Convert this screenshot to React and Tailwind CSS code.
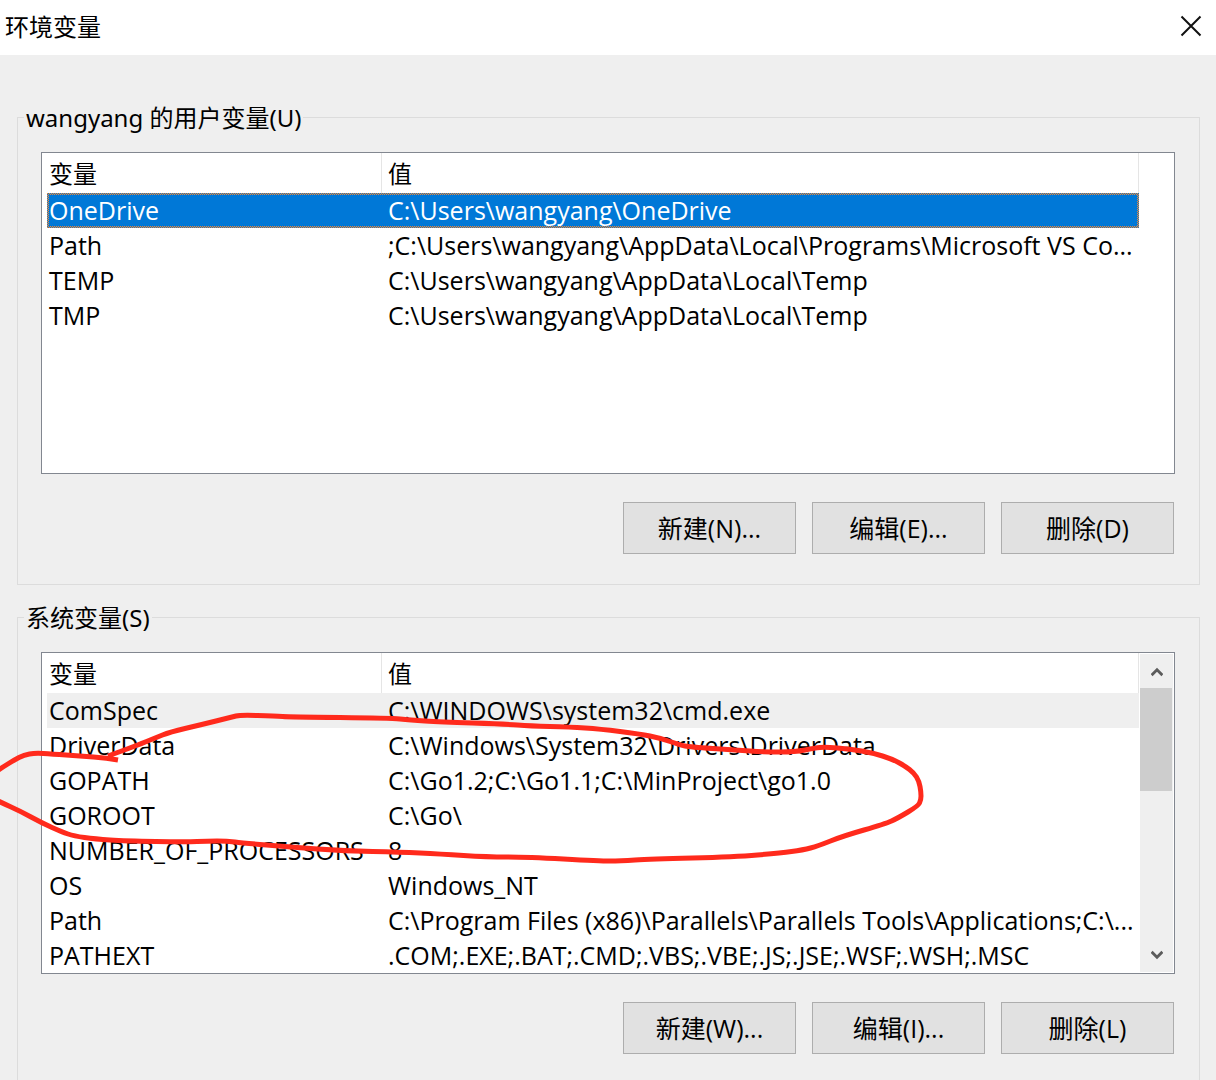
import clsx from 'clsx';

const userVariables = [
  { name: 'OneDrive', value: 'C:\\Users\\wangyang\\OneDrive', state: 'selected' },
  { name: 'Path', value: ';C:\\Users\\wangyang\\AppData\\Local\\Programs\\Microsoft VS Co...' },
  { name: 'TEMP', value: 'C:\\Users\\wangyang\\AppData\\Local\\Temp' },
  { name: 'TMP', value: 'C:\\Users\\wangyang\\AppData\\Local\\Temp' },
];

const systemVariables = [
  { name: 'ComSpec', value: 'C:\\WINDOWS\\system32\\cmd.exe', state: 'inactive' },
  { name: 'DriverData', value: 'C:\\Windows\\System32\\Drivers\\DriverData' },
  { name: 'GOPATH', value: 'C:\\Go1.2;C:\\Go1.1;C:\\MinProject\\go1.0' },
  { name: 'GOROOT', value: 'C:\\Go\\' },
  { name: 'NUMBER_OF_PROCESSORS', value: '8' },
  { name: 'OS', value: 'Windows_NT' },
  { name: 'Path', value: 'C:\\Program Files (x86)\\Parallels\\Parallels Tools\\Applications;C:\\...' },
  { name: 'PATHEXT', value: '.COM;.EXE;.BAT;.CMD;.VBS;.VBE;.JS;.JSE;.WSF;.WSH;.MSC' },
];

const strokePoints = [
  [118, 760], [107, 758], [80, 756], [52, 754], [35, 753], [24, 755], [14, 760], [0, 769], [-16, 779],
  [-16, 794], [0, 802], [20, 811], [42, 823], [62, 832], [74, 836], [95, 839], [125, 841], [187, 842],
  [207, 841], [227, 841], [243, 843], [290, 847], [345, 851], [400, 852], [440, 854], [487, 857],
  [527, 857], [600, 861], [620, 861], [650, 859], [735, 857], [780, 853], [803, 850], [818, 846],
  [843, 836], [885, 824], [898, 818], [918, 806], [921, 800], [921, 792], [919, 781], [914, 773],
  [905, 766], [892, 759], [873, 753], [850, 749], [825, 747], [815, 748], [795, 752], [765, 752],
  [735, 750], [690, 747], [680, 745], [660, 738], [640, 734], [600, 729], [570, 727], [530, 726],
  [505, 724], [440, 722], [410, 720], [390, 718], [290, 717], [275, 716], [240, 715], [232, 717],
  [200, 725], [170, 732], [155, 738], [138, 745], [108, 756],
];

// joins the points with quadratic curves through their midpoints
function smoothPath(points) {
  const last = points[points.length - 1];
  const curves = points.slice(1, -1).map(([x, y], i) => {
    const [nx, ny] = points[i + 2];
    return `Q${x} ${y} ${(x + nx) / 2} ${(y + ny) / 2}`;
  });
  return `M${points[0][0]} ${points[0][1]} ${curves.join(' ')} L${last[0]} ${last[1]}`;
}

function ScrollBar() {
  return (
    <div className="flex w-full flex-col bg-[#efefef]">
      <button type="button" aria-label="Scroll up" className="flex h-[34px] items-center justify-center pt-[2px]">
        <svg width="12" height="10" viewBox="0 0 12 10" fill="none" stroke="#5c5c5c" strokeWidth="2.8">
          <path d="M0.6 8.2 L6 2.8 L11.4 8.2" />
        </svg>
      </button>
      <div className="mr-px h-[103px] bg-[#cdcdcd]" />
      <div className="flex-1" />
      <button type="button" aria-label="Scroll down" className="flex h-[34px] items-center justify-center">
        <svg width="12" height="10" viewBox="0 0 12 10" fill="none" stroke="#5c5c5c" strokeWidth="2.8">
          <path d="M0.6 1.8 L6 7.2 L11.4 1.8" />
        </svg>
      </button>
    </div>
  );
}

function VariableTable({ variables, scrollable }) {
  return (
    <div className="flex min-h-[322px] border border-[#828790] bg-white">
      <div className="min-w-0 flex-1 pl-[5px]">
        <table className="w-full table-fixed border-separate border-spacing-0 text-left">
          <thead>
            <tr className="h-10">
              <th className="w-[335px] border-r border-[#e5e5e5] p-0 pl-[2px] font-normal">变量</th>
              <th className="border-r border-[#e5e5e5] p-0 pl-[6px] font-normal">值</th>
            </tr>
          </thead>
          <tbody className="font-['Open_Sans','Noto_Sans_CJK_SC',sans-serif] text-[25px]">
            {variables.map(({ name, value, state }) => (
              <tr
                key={name}
                className={clsx(
                  'h-[35px]',
                  state === 'inactive' && 'bg-[#efefef]',
                  state === 'selected' &&
                    'bg-[image:linear-gradient(#0078d7,#0078d7),repeating-conic-gradient(#ff8728_0_25%,#0078d7_0_50%)] bg-[length:calc(100%-4px)_calc(100%-4px),2px_2px] bg-[position:center,1px_0] [background-repeat:no-repeat,repeat] text-white'
                )}
              >
                <td className="truncate p-0 pl-[2px]">{name}</td>
                <td className="truncate p-0 pl-[6px]">{value}</td>
              </tr>
            ))}
          </tbody>
        </table>
      </div>
      <div className="m-px flex w-[33px] shrink-0">{scrollable && <ScrollBar />}</div>
    </div>
  );
}

function VariableGroup({ title, variables, actions, scrollable }) {
  return (
    <fieldset className="min-w-0 border border-[#dcdcdc] pt-[18px] pr-6 pb-[30px] pl-[23px]">
      <legend className="-ml-[17px] px-[2px]">{title}</legend>
      <VariableTable variables={variables} scrollable={scrollable} />
      <div className="mt-7 mr-px flex justify-end gap-4">
        {actions.map(action => (
          <button
            key={action}
            type="button"
            className="h-[52px] w-[173px] border border-[#adadad] bg-[#e1e1e1] font-['Open_Sans','Noto_Sans_CJK_SC',sans-serif] text-[25px] hover:border-[#0078d7] hover:bg-[#e5f1fb]"
          >
            {action}
          </button>
        ))}
      </div>
    </fieldset>
  );
}

export default function App() {
  return (
    <div className="relative h-screen overflow-hidden bg-[#efefef] font-['Noto_Sans','Noto_Sans_CJK_SC',sans-serif] text-[24px] leading-[33px] text-black">
      <header className="flex h-[55px] items-center justify-between bg-white pr-[14px] pb-[3px] pl-[5px]">
        <h1>环境变量</h1>
        <button type="button" aria-label="Close">
          <svg width="22" height="22" viewBox="0 0 22 22" fill="none" stroke="#111" strokeWidth="2">
            <path d="M1.5 1.5 L20.5 20.5 M20.5 1.5 L1.5 20.5" />
          </svg>
        </button>
      </header>

      <main className="flex flex-col gap-4 pt-[46px] pr-4 pl-[17px]">
        <VariableGroup
          title="wangyang 的用户变量(U)"
          variables={userVariables}
          actions={['新建(N)...', '编辑(E)...', '删除(D)']}
        />
        <VariableGroup
          title="系统变量(S)"
          variables={systemVariables}
          actions={['新建(W)...', '编辑(I)...', '删除(L)']}
          scrollable
        />
      </main>

      <svg
        className="pointer-events-none absolute top-[700px] left-0"
        width="940"
        height="180"
        viewBox="0 700 940 180"
        fill="none"
        stroke="#ff2a1c"
        strokeWidth="5"
        strokeLinejoin="round"
      >
        <path d={smoothPath(strokePoints)} />
      </svg>
    </div>
  );
}
